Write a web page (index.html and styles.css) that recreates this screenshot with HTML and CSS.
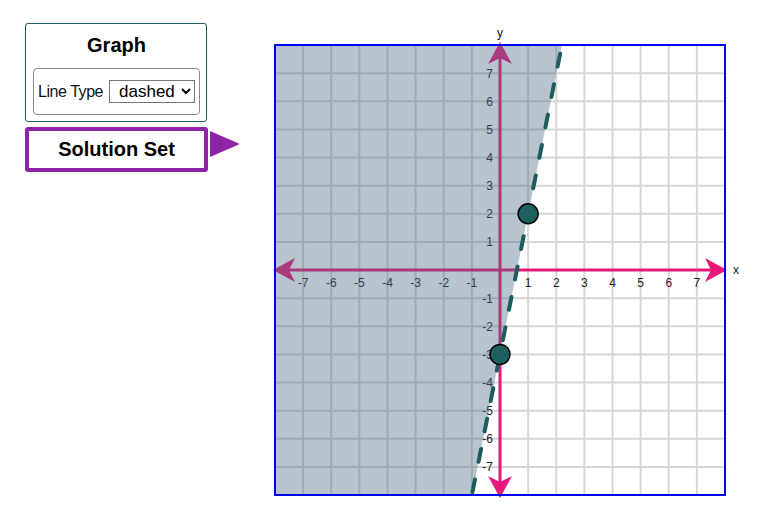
FILE: index.html
```html
<!DOCTYPE html>
<html lang="en">
<head>
<meta charset="utf-8">
<title>Graph</title>
<link rel="stylesheet" href="styles.css">
</head>
<body>
<div class="page">
  <div class="controls">
    <div class="card">
      <h2 class="card-title">Graph</h2>
      <div class="field">
        <label class="field-label" for="lt">Line Type</label>
        <select id="lt" class="field-select"><option>dashed</option><option>solid</option></select>
      </div>
    </div>
    <div class="solution-row">
      <button class="solution-btn">Solution Set</button>
      <span class="pointer"></span>
    </div>
  </div>
  <svg class="graph" width="497" height="492" viewBox="260 20 497 492" xmlns="http://www.w3.org/2000/svg">
    <defs>
      <clipPath id="box"><rect x="275" y="45" width="450" height="450"/></clipPath>
    </defs>
    <g class="grid">
      <line x1="303.125" y1="45" x2="303.125" y2="495"/>
      <line x1="331.25" y1="45" x2="331.25" y2="495"/>
      <line x1="359.375" y1="45" x2="359.375" y2="495"/>
      <line x1="387.5" y1="45" x2="387.5" y2="495"/>
      <line x1="415.625" y1="45" x2="415.625" y2="495"/>
      <line x1="443.75" y1="45" x2="443.75" y2="495"/>
      <line x1="471.875" y1="45" x2="471.875" y2="495"/>
      <line x1="528.125" y1="45" x2="528.125" y2="495"/>
      <line x1="556.25" y1="45" x2="556.25" y2="495"/>
      <line x1="584.375" y1="45" x2="584.375" y2="495"/>
      <line x1="612.5" y1="45" x2="612.5" y2="495"/>
      <line x1="640.625" y1="45" x2="640.625" y2="495"/>
      <line x1="668.75" y1="45" x2="668.75" y2="495"/>
      <line x1="696.875" y1="45" x2="696.875" y2="495"/>
      <line x1="275" y1="73.125" x2="725" y2="73.125"/>
      <line x1="275" y1="101.25" x2="725" y2="101.25"/>
      <line x1="275" y1="129.375" x2="725" y2="129.375"/>
      <line x1="275" y1="157.5" x2="725" y2="157.5"/>
      <line x1="275" y1="185.625" x2="725" y2="185.625"/>
      <line x1="275" y1="213.75" x2="725" y2="213.75"/>
      <line x1="275" y1="241.875" x2="725" y2="241.875"/>
      <line x1="275" y1="298.125" x2="725" y2="298.125"/>
      <line x1="275" y1="326.25" x2="725" y2="326.25"/>
      <line x1="275" y1="354.375" x2="725" y2="354.375"/>
      <line x1="275" y1="382.5" x2="725" y2="382.5"/>
      <line x1="275" y1="410.625" x2="725" y2="410.625"/>
      <line x1="275" y1="438.75" x2="725" y2="438.75"/>
      <line x1="275" y1="466.875" x2="725" y2="466.875"/>
    </g>
    <g class="axis">
      <line x1="276" y1="270" x2="724" y2="270"/>
      <line x1="500" y1="46" x2="500" y2="494"/>
    </g>
    <g class="arrow">
      <polygon points="727,270 705,258 711,270 705,282"/>
      <polygon points="273,270 295,258 289,270 295,282"/>
      <polygon points="500,42 488,64 500,58 512,64"/>
      <polygon points="500,498 488,476 500,482 512,476"/>
    </g>
    <g class="tick tick-x">
      <text x="303.125" y="287">-7</text>
      <text x="331.25" y="287">-6</text>
      <text x="359.375" y="287">-5</text>
      <text x="387.5" y="287">-4</text>
      <text x="415.625" y="287">-3</text>
      <text x="443.75" y="287">-2</text>
      <text x="471.875" y="287">-1</text>
      <text x="528.125" y="287">1</text>
      <text x="556.25" y="287">2</text>
      <text x="584.375" y="287">3</text>
      <text x="612.5" y="287">4</text>
      <text x="640.625" y="287">5</text>
      <text x="668.75" y="287">6</text>
      <text x="696.875" y="287">7</text>
    </g>
    <g class="tick tick-y">
      <text x="493" y="77.5">7</text>
      <text x="493" y="105.6">6</text>
      <text x="493" y="133.8">5</text>
      <text x="493" y="161.9">4</text>
      <text x="493" y="190">3</text>
      <text x="493" y="218.1">2</text>
      <text x="493" y="246.3">1</text>
      <text x="493" y="302.5">-1</text>
      <text x="493" y="330.6">-2</text>
      <text x="493" y="358.8">-3</text>
      <text x="493" y="386.9">-4</text>
      <text x="493" y="415">-5</text>
      <text x="493" y="443.1">-6</text>
      <text x="493" y="471.3">-7</text>
    </g>
    <text class="axis-name" x="500" y="37" text-anchor="middle">y</text>
    <text class="axis-name" x="733" y="274">x</text>
    <polygon class="shade" points="275,45 561.875,45 471.875,495 275,495"/>
    <rect class="frame" x="275" y="45" width="450" height="450"/>
    <g clip-path="url(#box)">
      <line class="boundary" x1="561.875" y1="45" x2="471.875" y2="495"/>
    </g>
    <circle class="pt" cx="528.125" cy="213.75" r="10"/>
    <circle class="pt" cx="500" cy="354.375" r="10"/>
  </svg>
</div>
</body>
</html>
```

FILE: styles.css
```css
html, body {
  margin: 0;
  padding: 0;
  background: #ffffff;
}

body {
  font-family: "Liberation Sans", Arial, sans-serif;
  color: #000;
}

.page {
  display: flex;
  align-items: flex-start;
}

.controls {
  margin: 23px 0 0 25px;
  display: flex;
  flex-direction: column;
  gap: 5px;
}

.card {
  width: 182px;
  box-sizing: border-box;
  border: 1px solid #1f5f5f;
  border-radius: 3px;
  padding: 9px 6px 6px 7px;
}

.card-title {
  margin: 0;
  font-size: 20px;
  line-height: 24px;
  font-weight: bold;
  text-align: center;
}

.field {
  margin-top: 11px;
  height: 47px;
  box-sizing: border-box;
  border: 1px solid #8a8a8a;
  border-radius: 4px;
  padding: 0 3px 0 4px;
  display: flex;
  align-items: center;
  gap: 6px;
}

.field-label {
  font-size: 16px;
  letter-spacing: -0.45px;
  color: #111;
}

.field-select {
  font-family: "Liberation Sans", Arial, sans-serif;
  font-size: 17px;
  height: 23px;
  width: 86px;
  color: #000;
  background: #fff;
  border: 1px solid #767676;
  border-radius: 0;
  padding: 0 0 0 5px;
}

.solution-row {
  display: flex;
  align-items: flex-start;
  gap: 2px;
}

.solution-btn {
  width: 183px;
  height: 45px;
  box-sizing: border-box;
  border: 4px solid #8e24aa;
  border-radius: 3px;
  background: #fff;
  font-family: "Liberation Sans", Arial, sans-serif;
  font-size: 20px;
  font-weight: bold;
  color: #000;
  padding: 0;
}

.pointer {
  margin-top: 4px;
  width: 0;
  height: 0;
  border-left: 30px solid #8e24aa;
  border-top: 13.5px solid transparent;
  border-bottom: 13.5px solid transparent;
}

.graph {
  display: block;
  margin: 20px 0 0 20px;
}

.grid line {
  stroke: #d6d6d6;
  stroke-width: 2;
}

.axis line {
  stroke: #e8197a;
  stroke-width: 3;
}

.arrow polygon {
  fill: #e8197a;
}

.tick text {
  font-family: "Liberation Sans", Arial, sans-serif;
  font-size: 12px;
  fill: #222;
}

.tick-x text {
  text-anchor: middle;
}

.tick-y text {
  text-anchor: end;
}

.axis-name {
  font-family: "Liberation Sans", Arial, sans-serif;
  font-size: 12px;
  fill: #111;
}

.shade {
  fill: rgba(75, 108, 132, 0.4);
}

.frame {
  fill: none;
  stroke: #0000ff;
  stroke-width: 2;
}

.boundary {
  stroke: #1c5c5c;
  stroke-width: 4;
  stroke-linecap: round;
  stroke-dasharray: 13 18;
  stroke-dashoffset: 22;
}

.pt {
  fill: #1f6161;
  stroke: #000;
  stroke-width: 1.5;
}
```
